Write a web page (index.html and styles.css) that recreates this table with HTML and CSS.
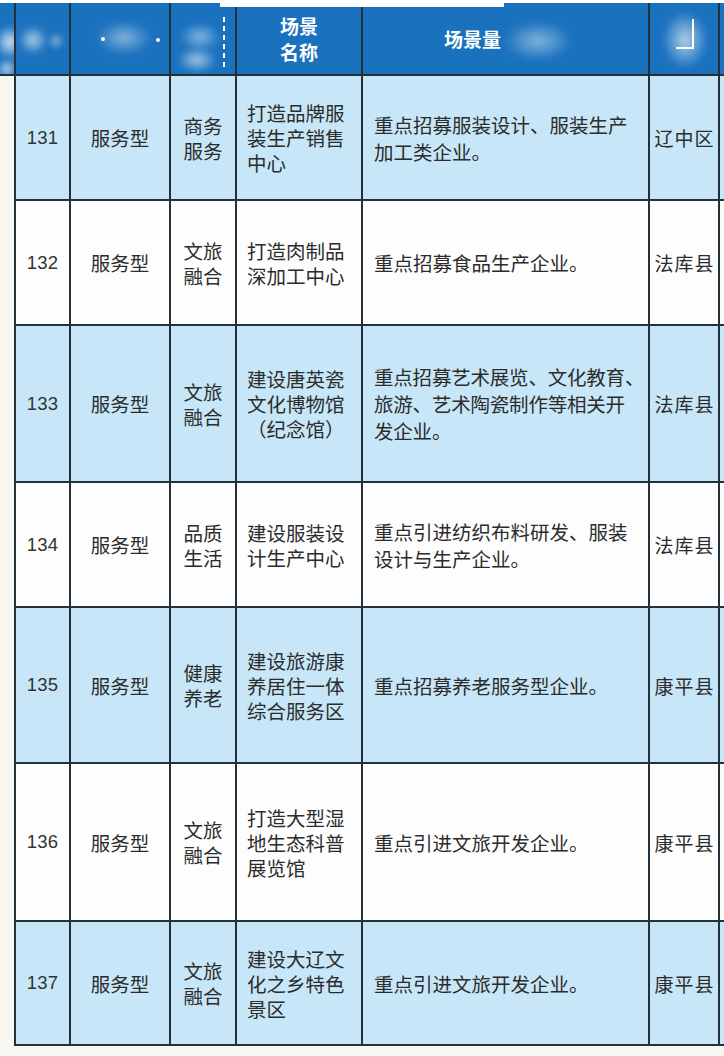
FILE: index.html
```html
<!DOCTYPE html>
<html lang="zh-CN">
<head>
<meta charset="utf-8">
<title>场景清单</title>
<link rel="stylesheet" href="styles.css">
</head>
<body>
<div class="page">
  <div class="top-gap"></div>
  <table class="grid">
    <colgroup>
      <col class="c-gut">
      <col class="c-num">
      <col class="c-type">
      <col class="c-cat">
      <col class="c-name">
      <col class="c-desc">
      <col class="c-area">
      <col class="c-extra">
    </colgroup>
    <thead>
      <tr class="head">
        <th class="gut-head"><span class="blob b1"></span><span class="blob b1b"></span></th>
        <th class="hc"><span class="blob b2"></span><span class="blob b2b"></span></th>
        <th class="hc"><span class="blob b3"></span><span class="dot d1"></span><span class="dot d2"></span></th>
        <th class="hc"><span class="blob b4"></span><span class="blob b4b"></span><span class="dash"></span></th>
        <th class="hc">场景<br>名称</th>
        <th class="hc hdesc">场景量<span class="blob b5"></span></th>
        <th class="hc"><span class="blob b6"></span><span class="glyph"></span></th>
        <th class="hc"></th>
      </tr>
    </thead>
    <tbody>
      <tr class="r125 blue">
        <td class="gut"></td>
        <td class="num">131</td>
        <td class="ctr">服务型</td>
        <td class="ctr">商务<br>服务</td>
        <td class="name">打造品牌服<br>装生产销售<br>中心</td>
        <td class="desc">重点招募服装设计、服装生产<br>加工类企业。</td>
        <td class="area">辽中区</td>
        <td></td>
      </tr>
      <tr class="r125 white">
        <td class="gut"></td>
        <td class="num">132</td>
        <td class="ctr">服务型</td>
        <td class="ctr">文旅<br>融合</td>
        <td class="name">打造肉制品<br>深加工中心</td>
        <td class="desc">重点招募食品生产企业。</td>
        <td class="area">法库县</td>
        <td></td>
      </tr>
      <tr class="r157 blue">
        <td class="gut"></td>
        <td class="num">133</td>
        <td class="ctr">服务型</td>
        <td class="ctr">文旅<br>融合</td>
        <td class="name">建设唐英瓷<br>文化博物馆<br>（纪念馆）</td>
        <td class="desc desc-tight">重点招募艺术展览、文化教育、<br>旅游、艺术陶瓷制作等相关开<br>发企业。</td>
        <td class="area">法库县</td>
        <td></td>
      </tr>
      <tr class="r125 white">
        <td class="gut"></td>
        <td class="num">134</td>
        <td class="ctr">服务型</td>
        <td class="ctr">品质<br>生活</td>
        <td class="name">建设服装设<br>计生产中心</td>
        <td class="desc">重点引进纺织布料研发、服装<br>设计与生产企业。</td>
        <td class="area">法库县</td>
        <td></td>
      </tr>
      <tr class="r156 blue">
        <td class="gut"></td>
        <td class="num">135</td>
        <td class="ctr">服务型</td>
        <td class="ctr">健康<br>养老</td>
        <td class="name">建设旅游康<br>养居住一体<br>综合服务区</td>
        <td class="desc">重点招募养老服务型企业。</td>
        <td class="area">康平县</td>
        <td></td>
      </tr>
      <tr class="r158 white">
        <td class="gut"></td>
        <td class="num">136</td>
        <td class="ctr">服务型</td>
        <td class="ctr">文旅<br>融合</td>
        <td class="name">打造大型湿<br>地生态科普<br>展览馆</td>
        <td class="desc">重点引进文旅开发企业。</td>
        <td class="area">康平县</td>
        <td></td>
      </tr>
      <tr class="r124 blue">
        <td class="gut"></td>
        <td class="num">137</td>
        <td class="ctr">服务型</td>
        <td class="ctr">文旅<br>融合</td>
        <td class="name">建设大辽文<br>化之乡特色<br>景区</td>
        <td class="desc">重点引进文旅开发企业。</td>
        <td class="area">康平县</td>
        <td></td>
      </tr>
    </tbody>
  </table>
  <div class="notch"></div>
</div>
</body>
</html>
```

FILE: styles.css
```css
html, body {
  margin: 0;
  padding: 0;
  background: #f8f6f0;
  overflow: hidden;
}
body {
  width: 724px;
  height: 1056px;
  font-family: "Noto Sans CJK SC", "Noto Sans", sans-serif;
  color: #2c2c2c;
}
.page {
  position: relative;
  width: 724px;
  height: 1056px;
  overflow: hidden;
}
.top-gap {
  height: 3px;
  background: #ffffff;
}
.grid {
  border-collapse: collapse;
  table-layout: fixed;
  width: 779px;
}
.c-gut { width: 15px; }
.c-num { width: 55px; }
.c-type { width: 100px; }
.c-cat { width: 66px; }
.c-name { width: 126px; }
.c-desc { width: 287px; }
.c-area { width: 70px; }
.c-extra { width: 60px; }

.grid th, .grid td {
  padding: 0;
  border: 2px solid #24303a;
  vertical-align: middle;
  overflow: hidden;
  white-space: nowrap;
}
.head th {
  height: 71px;
  background: #1a71be;
  color: #ffffff;
  font-weight: 700;
  font-size: 19px;
  line-height: 26px;
  border-top: none;
  position: relative;
  text-align: center;
}
.head .gut-head {
  border-left: none;
  border-top: none;
}
.head .hdesc {
  text-align: left;
  padding-left: 81px;
}
.grid td.gut {
  background: #f8f6f0;
  border-left: none;
  border-top: none;
  border-bottom: none;
}
.r125 td { height: 123px; }
.r157 td { height: 155px; }
.r156 td { height: 154px; }
.r158 td { height: 156px; }
.r124 td { height: 122px; }
.blue td { background: #c7e6f7; }
.white td { background: #fdfdfd; }
.blue td.gut, .white td.gut { background: #f8f6f0; }

.num {
  text-align: center;
  font-family: "Liberation Sans", Arial, sans-serif;
  font-size: 18.5px;
  letter-spacing: 0.2px;
  color: #333333;
}
.ctr {
  text-align: center;
  font-size: 19.5px;
  line-height: 25px;
}
.name {
  text-align: left;
  padding-left: 10px !important;
  font-size: 19.5px;
  line-height: 25px;
}
.desc {
  text-align: left;
  padding-left: 11px !important;
  font-size: 19.5px;
  line-height: 27px;
}
.desc-tight {
  letter-spacing: -0.2px;
}
.area {
  text-align: center;
  font-size: 19px;
  letter-spacing: 1px;
  padding-left: 1px !important;
}

/* header blur blotches (overlay) */
.blob {
  position: absolute;
  border-radius: 50%;
  background: radial-gradient(closest-side, rgba(255,255,255,0.85), rgba(210,232,245,0.45) 55%, rgba(255,255,255,0));
  filter: blur(3px);
}
.b1 { left: -6px; top: 22px; width: 32px; height: 34px; }
.b1b { left: -4px; top: 55px; width: 22px; height: 22px; opacity: 0.9; }
.b2 { left: 2px; top: 22px; width: 30px; height: 30px; opacity: 0.8; }
.b2b { left: 32px; top: 30px; width: 16px; height: 16px; opacity: 0.7; }
.b3 { left: 24px; top: 18px; width: 58px; height: 34px; opacity: 0.55; }
.dot {
  position: absolute;
  width: 4px;
  height: 4px;
  border-radius: 50%;
  background: #ffffff;
}
.d1 { left: 30px; top: 34px; }
.d2 { left: 85px; top: 35px; }
.b4 { left: 8px; top: 20px; width: 42px; height: 28px; opacity: 0.6; }
.b4b { left: 6px; top: 44px; width: 40px; height: 26px; opacity: 0.75; }
.dash {
  position: absolute;
  left: 52px;
  top: 14px;
  width: 2px;
  height: 50px;
  background: repeating-linear-gradient(to bottom, #ffffff 0 5px, rgba(255,255,255,0) 5px 9px);
}
.b5 { left: 140px; top: 18px; width: 70px; height: 40px; opacity: 0.55; }
.b6 { left: 12px; top: 8px; width: 46px; height: 58px; opacity: 0.8; }
.glyph {
  position: absolute;
  left: 26px;
  top: 16px;
  width: 18px;
  height: 30px;
  border-right: 2px solid #ffffff;
  border-bottom: 2px solid #ffffff;
  box-sizing: border-box;
}
.notch {
  position: absolute;
  left: 220px;
  top: 0;
  width: 284px;
  height: 7px;
  background: #ffffff;
}
```
